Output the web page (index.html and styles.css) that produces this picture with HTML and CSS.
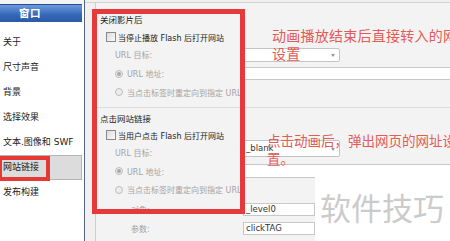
FILE: index.html
```html
<!DOCTYPE html>
<html lang="zh-CN">
<head>
<meta charset="utf-8">
<title>网站链接</title>
<link rel="stylesheet" href="styles.css">
</head>
<body>
<div class="app">
  <aside class="sidebar">
    <div class="side-head">窗口</div>
    <ul class="nav">
      <li>关于</li>
      <li>尺寸声音</li>
      <li>背景</li>
      <li>选择效果</li>
      <li>文本.图像和 SWF</li>
      <li class="active">网站链接</li>
      <li>发布构建</li>
    </ul>
  </aside>
  <main class="main">
    <div class="panel">
      <div class="row r-sec"><div class="lbl sec">关闭影片后</div><div class="ctl"></div></div>
      <div class="row r-chk"><div class="lbl chk"><span class="box"></span>当停止播放 Flash 后打开网站</div><div class="ctl"></div></div>
      <div class="row r-a"><div class="lbl dis">URL 目标:</div><div class="ctl"><div class="select"></div></div></div>
      <div class="row r-a"><div class="lbl dis rad"><span class="radio on"></span>URL 地址:</div><div class="ctl"><div class="input wide"></div></div></div>
      <div class="row r-b"><div class="lbl dis rad"><span class="radio"></span>当点击标签时重定向到指定 URL</div><div class="ctl"></div></div>
      <div class="row r-sec sep"><div class="lbl sec">点击网站链接</div><div class="ctl"></div></div>
      <div class="row r-chk"><div class="lbl chk"><span class="box"></span>当用户点击 Flash 后打开网站</div><div class="ctl"></div></div>
      <div class="row r-a"><div class="lbl dis">URL 目标:</div><div class="ctl"><div class="select tall">_blank</div></div></div>
      <div class="row r-c"><div class="lbl dis rad"><span class="radio on"></span>URL 地址:</div><div class="ctl"><div class="input wide tall2"></div></div></div>
      <div class="row r-a"><div class="lbl dis rad"><span class="radio"></span>当点击标签时重定向到指定 URL</div><div class="ctl"></div></div>
      <div class="row r-d"><div class="lbl dis sub">对象:</div><div class="ctl"><div class="input short">_level0</div></div></div>
      <div class="row r-c"><div class="lbl dis sub">参数:</div><div class="ctl"><div class="input short">clickTAG</div></div></div>
    </div>
  </main>
  <div class="redbox"></div>
  <div class="note note1">动画播放结束后直接转入的网址的<br>设置</div>
  <div class="note note2">点击动画后，弹出网页的网址设<br>置。</div>
  <div class="wm">软件技巧</div>
</div>
</body>
</html>
```

FILE: styles.css
```css
*, *::before, *::after { box-sizing: border-box; margin: 0; padding: 0; }
html, body { width: 450px; height: 241px; overflow: hidden; }
body {
  font-family: "DejaVu Sans", "Noto Sans CJK SC", sans-serif;
  background: #f0f0f0;
  color: #222;
}
.app { display: flex; height: 241px; position: relative; overflow: hidden; }

.sidebar {
  width: 85px;
  flex: none;
  border-right: 1px solid #56657d;
  background: linear-gradient(#f3f3f3 0 4px, #fff 4px);
  padding-top: 4px;
}
.side-head {
  height: 18px;
  margin-right: 2px;
  background: linear-gradient(#6d9ade, #3466b6 60%, #2b5aa6);
  border-top: 1px solid #2a4f8f;
  color: #fff;
  font-weight: bold;
  font-size: 10.5px;
  line-height: 16px;
  padding-left: 19px;
  letter-spacing: 0.5px;
}
.nav { list-style: none; padding-top: 8px; }
.nav li {
  height: 25px;
  line-height: 25px;
  font-size: 9px;
  padding-left: 3px;
  white-space: nowrap;
}
.nav li.active {
  background: #dcdcdc;
  border: 1px solid #b5b5b5;
  border-left: none;
  margin-right: 2px;
  line-height: 23px;
  position: relative;
}
.nav li.active::after {
  content: "";
  position: absolute;
  left: -2px;
  top: 0;
  width: 52px;
  height: 25px;
  border: 4px solid #e53935;
}

.main {
  flex: 1;
  margin-top: 2px;
  border-top: 1px solid #d2d2d2;
  background: #f0f0f0;
}
.panel {
  margin-left: 10px;
  height: 100%;
  border-left: 1px solid #cdcdcd;
  background: #f3f3f3;
  padding-top: 6px;
  font-size: 8px;
}
.row { display: flex; align-items: center; }
.r-sec { height: 20px; }
.r-chk { height: 16px; }
.r-a { height: 19px; }
.r-b { height: 18px; }
.r-c { height: 18px; }
.r-d { height: 20px; }
.sep { margin-top: 6px; border-top: 1px solid #dddddd; }
.lbl {
  width: 147px;
  flex: none;
  display: flex;
  align-items: center;
  white-space: nowrap;
}
.ctl { flex: 1; display: flex; align-items: center; height: 100%; }
.sec { padding-left: 4px; color: #222; font-size: 8.5px; }
.chk { padding-left: 10px; color: #222; }
.dis { padding-left: 19px; color: #a4a4a4; }
.sub { padding-left: 35px; }
.box {
  width: 10px;
  height: 10px;
  border: 1px solid #8a8a8a;
  background: linear-gradient(135deg, #dcdcdc, #fafafa);
  margin-right: 2px;
  flex: none;
}
.radio {
  width: 8px;
  height: 8px;
  border-radius: 50%;
  border: 1px solid #bdbdbd;
  background: #ececec;
  margin-right: 4px;
  flex: none;
  display: flex;
  align-items: center;
  justify-content: center;
}
.radio.on::after {
  content: "";
  width: 4px;
  height: 4px;
  border-radius: 50%;
  background: #a8a8a8;
}

.select {
  width: 97px;
  height: 14px;
  background: #fff;
  border: 1px solid #c4c4c4;
  border-radius: 2px;
  position: relative;
  font-size: 8.5px;
  line-height: 14px;
  padding-left: 2px;
  color: #333;
}
.select::after {
  content: "";
  position: absolute;
  right: 4px;
  top: 50%;
  margin-top: -1px;
  border-left: 2.5px solid transparent;
  border-right: 2.5px solid transparent;
  border-top: 3px solid #999;
}
.select.tall { height: 17px; align-self: flex-start; margin-top: -3px; }
.input {
  height: 13px;
  background: #fff;
  border: 1px solid #c8c8c8;
  font-size: 8.5px;
  line-height: 11px;
  padding-left: 2px;
  color: #333;
}
.input.wide { width: 220px; border-right: none; }
.input.tall2 { height: 14px; }
.input.short { width: 72px; }

.redbox {
  position: absolute;
  left: 92px;
  top: 9px;
  width: 153px;
  height: 205px;
  border: 5px solid #e5393b;
}
.note {
  position: absolute;
  color: #e35a56;
  font-family: "Noto Sans CJK SC", sans-serif;
  font-size: 14px;
  line-height: 18px;
  white-space: nowrap;
}
.note1 { left: 272px; top: 26px; letter-spacing: 0.25px; }
.note2 { left: 267px; top: 131px; font-size: 13.5px; }
.wm {
  position: absolute;
  left: 315px;
  top: 167px;
  right: 0;
  bottom: 0;
  background: #fff;
  color: #cbcbcb;
  font-family: "Noto Sans CJK SC", sans-serif;
  font-size: 31px;
  line-height: 31px;
  padding-left: 5px;
  padding-top: 24px;
  white-space: nowrap;
}
```
